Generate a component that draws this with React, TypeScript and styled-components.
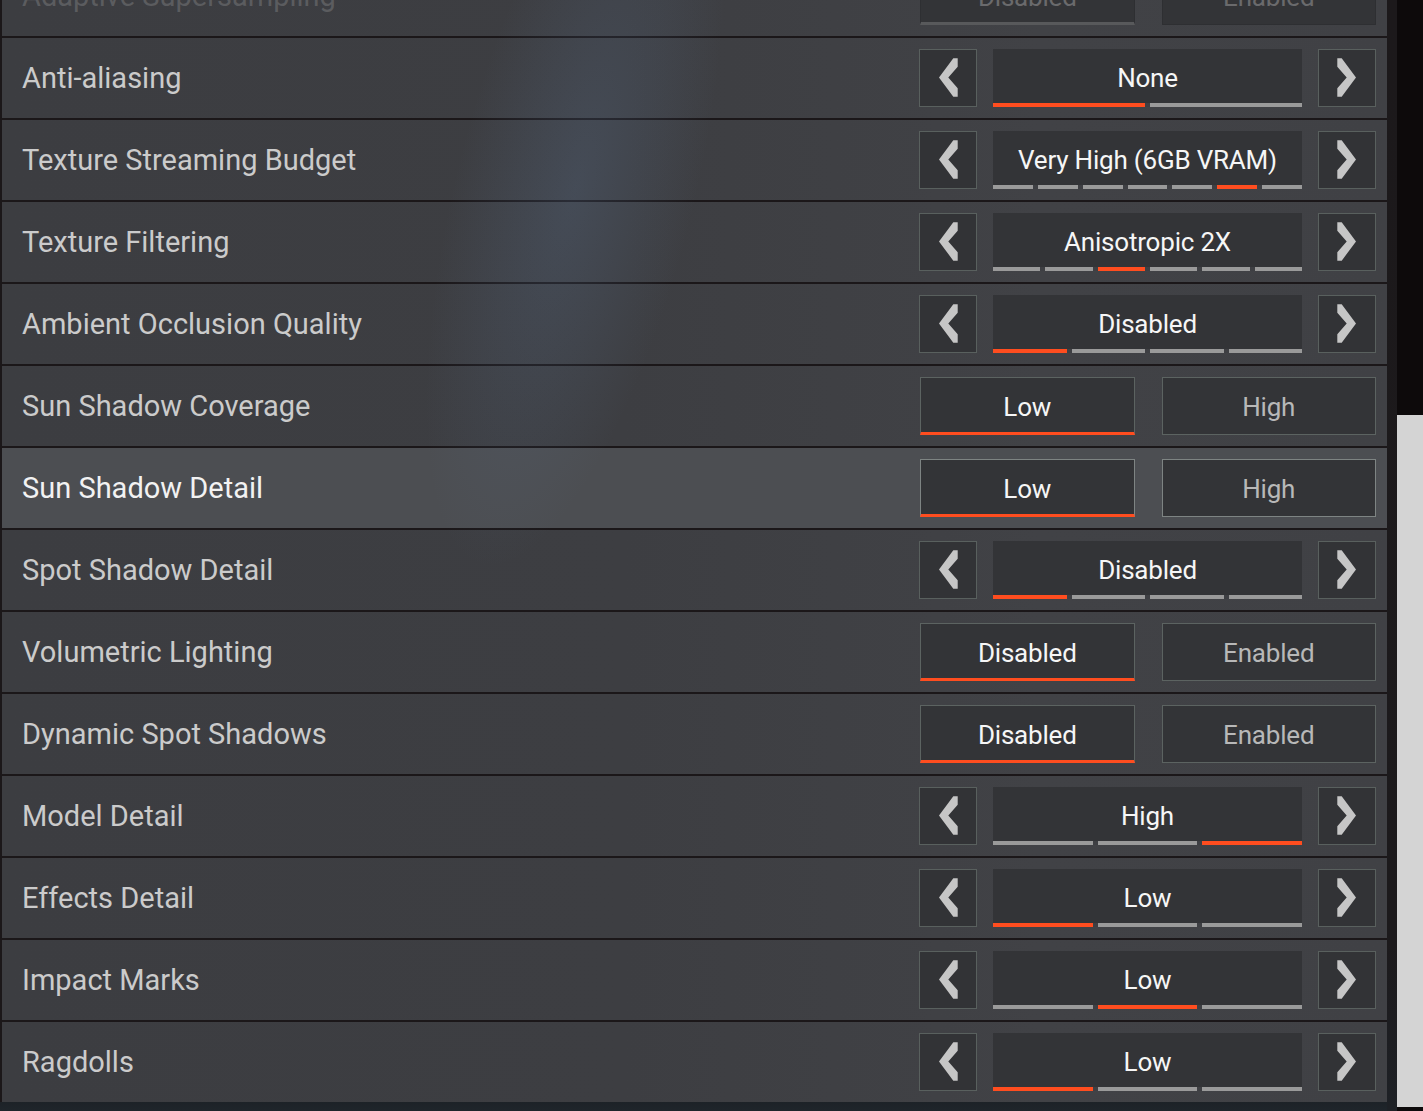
import React from "react";
import styled, { createGlobalStyle } from "styled-components";

const Global = createGlobalStyle`
  html, body { margin: 0; padding: 0; height: 100%; overflow: hidden; background: #141215; }
  #root { height: 100%; }
  * { box-sizing: border-box; }
`;

const Page = styled.div`
  display: flex;
  width: 1423px;
  height: 1111px;
  overflow: hidden;
  font-family: Roboto, "Noto Sans", "Liberation Sans", sans-serif;
  background: #141215;
`;

const Panel = styled.div`
  position: relative;
  width: 1387px;
  height: 1111px;
  padding-left: 2px;
  overflow: hidden;
  background: linear-gradient(180deg, #1b1719 0px, #1b1719 1102px, #1d2227 1102px, #1f252b 1111px);
`;

const List = styled.div`
  display: flex;
  flex-direction: column;
  gap: 2px;
  margin-top: -44px;
`;

const Row = styled.div<{ $hover?: boolean }>`
  height: 80px;
  flex: none;
  display: flex;
  align-items: center;
  justify-content: space-between;
  padding: 0 11px 0 20px;
  background: ${(p) =>
    p.$hover
      ? "#4c4e52"
      : "linear-gradient(90deg, #3c3d41 0%, #3d3e42 45%, #414246 75%, #404145 100%)"};
`;

const Label = styled.span<{ $tone: "normal" | "hover" | "dim" }>`
  font-size: 29px;
  line-height: 1;
  padding-top: 1px;
  color: ${(p) => (p.$tone === "hover" ? "#f2f2f2" : p.$tone === "dim" ? "#5b5c5f" : "#cbcbcb")};
`;

const Cycler = styled.div`
  display: flex;
  align-items: center;
  gap: 16px;
`;

const ArrowBtn = styled.div`
  width: 58px;
  height: 58px;
  flex: none;
  display: flex;
  align-items: center;
  justify-content: center;
  background: #323336;
  border: 1px solid #59605e;
`;

const ValueBox = styled.div`
  width: 309px;
  height: 58px;
  display: flex;
  flex-direction: column;
  background: #333437;
`;

const ValueText = styled.div`
  flex: 1;
  display: flex;
  align-items: center;
  justify-content: center;
  padding-top: 3px;
  font-size: 26px;
  letter-spacing: -0.2px;
  color: #f6f6f6;
`;

const Segs = styled.div`
  display: flex;
  gap: 5px;
  height: 4px;
  background: #3e3f43;
`;

const Seg = styled.div<{ $on: boolean }>`
  flex: 1;
  background: ${(p) => (p.$on ? "#ff4d1f" : "#9a9a9a")};
`;

const Toggle = styled.div`
  display: flex;
  gap: 27px;
  width: 456px;
`;

const ToggleBtn = styled.div<{ $on: boolean; $hover?: boolean; $dim?: boolean }>`
  flex: 1;
  height: 58px;
  display: flex;
  align-items: center;
  justify-content: center;
  padding-top: ${(p) => (p.$on ? "3px" : "1px")};
  background: #333437;
  border: 1px solid
    ${(p) => (p.$dim ? "#2e2f32" : p.$hover ? "#7e8483" : "#5c6361")};
  border-bottom: ${(p) =>
    p.$on
      ? `3px solid ${p.$dim ? "#58595b" : "#ff4d1f"}`
      : `1px solid ${p.$dim ? "#2e2f32" : p.$hover ? "#7e8483" : "#5c6361"}`};
  font-size: 26px;
  letter-spacing: -0.2px;
  color: ${(p) => (p.$dim ? "#6a6a6c" : p.$on ? "#f6f6f6" : "#b8b8b8")};
`;

const Beam = styled.div`
  position: absolute;
  left: 440px;
  top: -140px;
  width: 240px;
  height: 780px;
  transform: rotate(14deg);
  pointer-events: none;
  background: radial-gradient(
    ellipse 50% 50% at 50% 42%,
    rgba(100, 130, 170, 0.2) 0%,
    rgba(100, 130, 170, 0.1) 50%,
    rgba(100, 130, 170, 0) 100%
  );
`;

const Gutter = styled.div`
  width: 10px;
  height: 1111px;
  background: linear-gradient(180deg, #1c191b 0%, #1c1a1c 85%, #1e2126 100%);
`;

const ScrollTrack = styled.div`
  width: 26px;
  height: 1111px;
  display: flex;
  flex-direction: column;
  background: #0d0a0b;
`;

const Thumb = styled.div`
  background: #d4d4d4;
`;

const Chevron = ({ dir }: { dir: "left" | "right" }) => (
  <svg
    width="56"
    height="56"
    viewBox="1 1 56 56"
    style={{ transform: dir === "right" ? "scaleX(-1)" : undefined }}
  >
    <polygon
      points="34.3,9.3 38.7,9.3 38.7,17.7 29.3,28.4 38.7,39.3 38.7,47.7 34.3,47.7 20,28.4"
      fill="#c6c6c6"
    />
  </svg>
);

type Setting =
  | { label: string; kind: "cycle"; value: string; count: number; sel: number }
  | { label: string; kind: "toggle"; options: [string, string]; sel: number; hover?: boolean; dim?: boolean };

const settings: Setting[] = [
  { label: "Adaptive Supersampling", kind: "toggle", options: ["Disabled", "Enabled"], sel: 0, dim: true },
  { label: "Anti-aliasing", kind: "cycle", value: "None", count: 2, sel: 0 },
  { label: "Texture Streaming Budget", kind: "cycle", value: "Very High (6GB VRAM)", count: 7, sel: 5 },
  { label: "Texture Filtering", kind: "cycle", value: "Anisotropic 2X", count: 6, sel: 2 },
  { label: "Ambient Occlusion Quality", kind: "cycle", value: "Disabled", count: 4, sel: 0 },
  { label: "Sun Shadow Coverage", kind: "toggle", options: ["Low", "High"], sel: 0 },
  { label: "Sun Shadow Detail", kind: "toggle", options: ["Low", "High"], sel: 0, hover: true },
  { label: "Spot Shadow Detail", kind: "cycle", value: "Disabled", count: 4, sel: 0 },
  { label: "Volumetric Lighting", kind: "toggle", options: ["Disabled", "Enabled"], sel: 0 },
  { label: "Dynamic Spot Shadows", kind: "toggle", options: ["Disabled", "Enabled"], sel: 0 },
  { label: "Model Detail", kind: "cycle", value: "High", count: 3, sel: 2 },
  { label: "Effects Detail", kind: "cycle", value: "Low", count: 3, sel: 0 },
  { label: "Impact Marks", kind: "cycle", value: "Low", count: 3, sel: 1 },
  { label: "Ragdolls", kind: "cycle", value: "Low", count: 3, sel: 0 },
];

export default function App() {
  return (
    <>
      <Global />
      <Page>
        <Panel>
          <List>
            {settings.map((s) => {
              const hover = s.kind === "toggle" && !!s.hover;
              const dim = s.kind === "toggle" && !!s.dim;
              return (
                <Row key={s.label} $hover={hover}>
                  <Label $tone={hover ? "hover" : dim ? "dim" : "normal"}>{s.label}</Label>
                  {s.kind === "cycle" ? (
                    <Cycler>
                      <ArrowBtn>
                        <Chevron dir="left" />
                      </ArrowBtn>
                      <ValueBox>
                        <ValueText>{s.value}</ValueText>
                        <Segs>
                          {Array.from({ length: s.count }).map((_, i) => (
                            <Seg key={i} $on={i === s.sel} />
                          ))}
                        </Segs>
                      </ValueBox>
                      <ArrowBtn>
                        <Chevron dir="right" />
                      </ArrowBtn>
                    </Cycler>
                  ) : (
                    <Toggle>
                      {s.options.map((o, i) => (
                        <ToggleBtn key={o} $on={i === s.sel} $hover={hover} $dim={dim}>
                          {o}
                        </ToggleBtn>
                      ))}
                    </Toggle>
                  )}
                </Row>
              );
            })}
          </List>
          <Beam />
        </Panel>
        <Gutter />
        <ScrollTrack>
          <Thumb style={{ marginTop: 415, height: 692 }} />
        </ScrollTrack>
      </Page>
    </>
  );
}
